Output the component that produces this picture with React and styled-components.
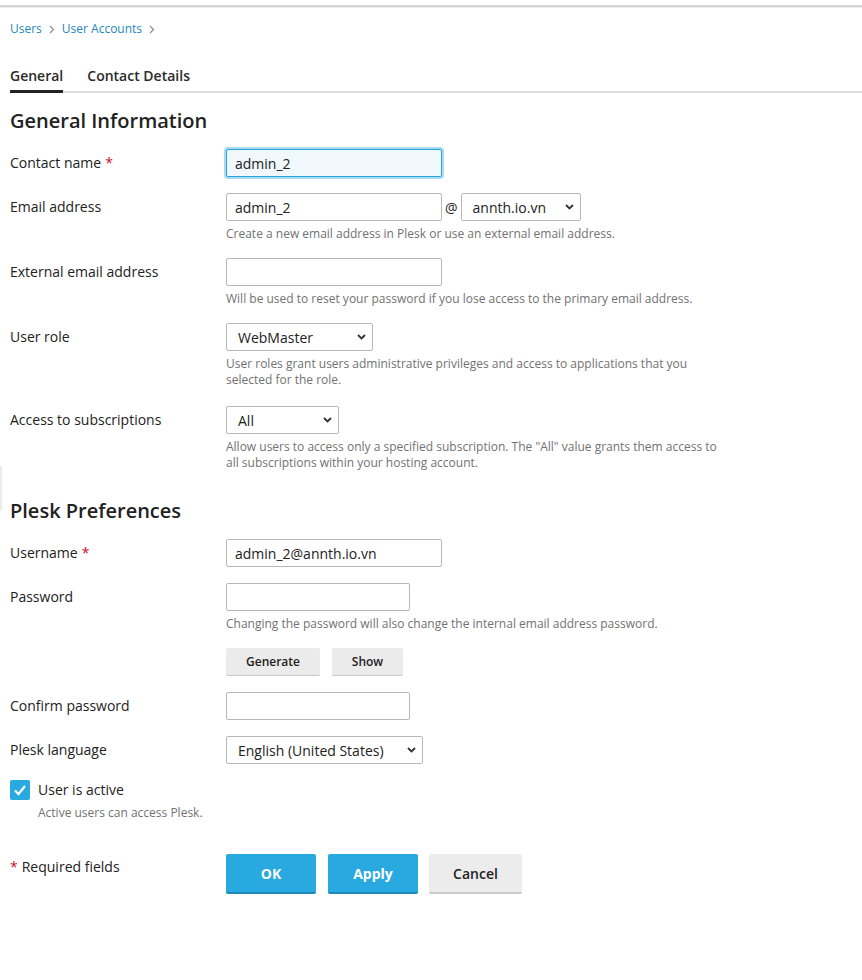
import React from 'react'
import styled, { createGlobalStyle } from 'styled-components'

const GlobalStyle = createGlobalStyle`
	body {
		margin: 0;
		background: #fff;
		font-family: 'Open Sans', 'Noto Sans', sans-serif;
		color: #222;
	}
	* {
		box-sizing: border-box;
	}
`

const TopBand = styled.div`
	height: 7px;
	border-bottom: 2px solid #d6d6d6;
	box-shadow: 0 1px 0 #ececec;
`
const Page = styled.div`
	padding-left: 10px;
	position: relative;
`
const EdgeMark = styled.div`
	position: absolute;
	left: 0;
	top: 445px;
	width: 2px;
	height: 45px;
	background: #ececec;
`
const Breadcrumbs = styled.nav`
	display: flex;
	align-items: center;
	gap: 6px;
	margin-top: 14px;
	font-size: 12px;
	line-height: 16px;
`
const Crumb = styled.a`
	color: #1f87bb;
	text-decoration: none;
`
const Chevron = styled.svg`
	width: 6px;
	height: 9px;
	margin: 0 1px;
`
const Tabs = styled.div`
	display: flex;
	gap: 24px;
	margin-top: 29px;
	box-shadow: inset 0 -2px 0 #dedede;
`
const Tab = styled.div`
	font-size: 14px;
	font-weight: 600;
	line-height: 20px;
	padding-bottom: 4px;
	color: #2b2b2b;
	border-bottom: 3px solid ${p => (p.$active ? '#232323' : 'transparent')};
`
const Heading = styled.h2`
	margin: ${p => p.$top}px 0 16px;
	font-size: 20px;
	line-height: 24px;
	font-weight: 600;
	color: #222;
`
const Row = styled.div`
	display: grid;
	grid-template-columns: 216px 1fr;
	margin-bottom: ${p => p.$gap || 16}px;
`
const Label = styled.label`
	font-size: 14px;
	line-height: 20px;
	padding-top: 4px;
	color: #222;
`
const Req = styled.span`
	color: #c8102e;
	margin-left: 4px;
`
const Field = styled.div`
	display: flex;
	flex-direction: column;
	align-items: flex-start;
`
const Inline = styled.div`
	display: flex;
	align-items: center;
	gap: 3px;
	font-size: 14px;
`
const Input = styled.input`
	width: ${p => p.$w}px;
	height: 28px;
	padding: 0 8px;
	font-family: inherit;
	font-size: 14px;
	color: #222;
	border: 1px solid ${p => (p.$focus ? '#28a4dc' : '#b8b8b8')};
	border-radius: 2px;
	background: ${p => (p.$focus ? '#f0f8fe' : '#fff')};
	box-shadow: ${p => (p.$focus ? '0 0 0 2px #a9dcf3' : 'none')};
	outline: none;
`
const SelectWrap = styled.div`
	position: relative;
	width: ${p => p.$w}px;
`
const Select = styled.select`
	appearance: none;
	width: 100%;
	height: 28px;
	padding: 0 24px 0 11px;
	font-family: inherit;
	font-size: 14px;
	color: #222;
	border: 1px solid #b8b8b8;
	border-radius: 2px;
	background: #fff;
	outline: none;
`
const Caret = styled.svg`
	position: absolute;
	right: 7px;
	top: 11px;
	width: 9px;
	height: 6px;
	pointer-events: none;
`
const Hint = styled.div`
	margin-top: 5px;
	max-width: 500px;
	font-size: 12px;
	line-height: 16px;
	color: #727272;
`
const ButtonRow = styled.div`
	display: flex;
	gap: 12px;
`
const SmallButton = styled.button`
	width: ${p => p.$w}px;
	height: 28px;
	font-family: inherit;
	font-size: 12px;
	font-weight: 600;
	color: #222;
	background: #ebebeb;
	border: none;
	border-bottom: 1px solid #c9c9c9;
	border-radius: 2px;
`
const CheckLine = styled.div`
	display: flex;
	align-items: center;
	gap: 8px;
	margin-top: 15px;
	font-size: 14px;
	line-height: 20px;
`
const CheckBox = styled.span`
	display: flex;
	align-items: center;
	justify-content: center;
	width: 20px;
	height: 20px;
	border-radius: 2px;
	background: #28a9e0;
`
const CheckHint = styled(Hint)`
	margin-left: 28px;
`
const Footer = styled.div`
	display: grid;
	grid-template-columns: 216px 1fr;
	margin-top: 33px;
`
const RequiredNote = styled.div`
	font-size: 14px;
	line-height: 20px;
	padding-top: 3px;
	color: #222;
`
const Star = styled.span`
	color: #c8102e;
	margin-right: 4px;
`
const Actions = styled.div`
	display: flex;
	gap: 12px;
`
const ActionButton = styled.button`
	width: ${p => p.$w}px;
	height: 40px;
	font-family: inherit;
	font-size: 14px;
	border: none;
	border-radius: 2px;
	color: ${p => (p.$primary ? '#fff' : '#222')};
	background: ${p => (p.$primary ? '#28a9e0' : '#ececec')};
	border-bottom: 2px solid ${p => (p.$primary ? '#1d87b6' : '#cacaca')};
	font-weight: ${p => (p.$primary ? 700 : 600)};
	&:last-child {
		margin-left: -1px;
	}
`

const DropSelect = ({ w, value }) => (
	<SelectWrap $w={w}>
		<Select defaultValue={value}>
			<option>{value}</option>
		</Select>
		<Caret viewBox="0 0 9 6">
			<path d="M1 1l3.5 3.5L8 1" fill="none" stroke="#333" strokeWidth="1.8" />
		</Caret>
	</SelectWrap>
)

const Sep = () => (
	<Chevron viewBox="0 0 6 9">
		<path d="M1 1l3.5 3.5L1 8" fill="none" stroke="#8a8a8a" strokeWidth="1.1" />
	</Chevron>
)

const App = () => {
	return (
		<>
			<GlobalStyle />
			<TopBand />
			<Page>
				<EdgeMark />
				<Breadcrumbs>
					<Crumb>Users</Crumb>
					<Sep />
					<Crumb>User Accounts</Crumb>
					<Sep />
				</Breadcrumbs>
				<Tabs>
					<Tab $active>General</Tab>
					<Tab>Contact Details</Tab>
				</Tabs>

				<Heading $top={16}>General Information</Heading>
				<Row>
					<Label>
						Contact name<Req>*</Req>
					</Label>
					<Field>
						<Input $w={216} $focus defaultValue="admin_2" />
					</Field>
				</Row>
				<Row>
					<Label>Email address</Label>
					<Field>
						<Inline>
							<Input $w={216} defaultValue="admin_2" />
							<span>@</span>
							<DropSelect w={120} value="annth.io.vn" />
						</Inline>
						<Hint>
							Create a new email address in Plesk or use an external email
							address.
						</Hint>
					</Field>
				</Row>
				<Row>
					<Label>External email address</Label>
					<Field>
						<Input $w={216} />
						<Hint>
							Will be used to reset your password if you lose access to the
							primary email address.
						</Hint>
					</Field>
				</Row>
				<Row $gap={18}>
					<Label>User role</Label>
					<Field>
						<DropSelect w={147} value="WebMaster" />
						<Hint>
							User roles grant users administrative privileges and access to
							applications that you selected for the role.
						</Hint>
					</Field>
				</Row>
				<Row>
					<Label>Access to subscriptions</Label>
					<Field>
						<DropSelect w={113} value="All" />
						<Hint>
							Allow users to access only a specified subscription. The "All"
							value grants them access to all subscriptions within your hosting
							account.
						</Hint>
					</Field>
				</Row>

				<Heading $top={28}>Plesk Preferences</Heading>
				<Row>
					<Label>
						Username<Req>*</Req>
					</Label>
					<Field>
						<Input $w={216} defaultValue="admin_2@annth.io.vn" />
					</Field>
				</Row>
				<Row>
					<Label>Password</Label>
					<Field>
						<Input $w={184} type="password" />
						<Hint>
							Changing the password will also change the internal email address
							password.
						</Hint>
					</Field>
				</Row>
				<Row>
					<span />
					<ButtonRow>
						<SmallButton $w={94}>Generate</SmallButton>
						<SmallButton $w={71}>Show</SmallButton>
					</ButtonRow>
				</Row>
				<Row>
					<Label>Confirm password</Label>
					<Field>
						<Input $w={184} type="password" />
					</Field>
				</Row>
				<Row>
					<Label>Plesk language</Label>
					<Field>
						<DropSelect w={197} value="English (United States)" />
					</Field>
				</Row>
				<CheckLine>
					<CheckBox>
						<svg width="16" height="16" viewBox="0 0 16 16">
							<path
								d="M3 8.5l3.5 3.5L13 4"
								fill="none"
								stroke="#fff"
								strokeWidth="2.2"
							/>
						</svg>
					</CheckBox>
					User is active
				</CheckLine>
				<CheckHint>Active users can access Plesk.</CheckHint>

				<Footer>
					<RequiredNote>
						<Star>*</Star>Required fields
					</RequiredNote>
					<Actions>
						<ActionButton $primary $w={90}>
							OK
						</ActionButton>
						<ActionButton $primary $w={90}>
							Apply
						</ActionButton>
						<ActionButton $w={93}>Cancel</ActionButton>
					</Actions>
				</Footer>
			</Page>
		</>
	)
}

export default App
